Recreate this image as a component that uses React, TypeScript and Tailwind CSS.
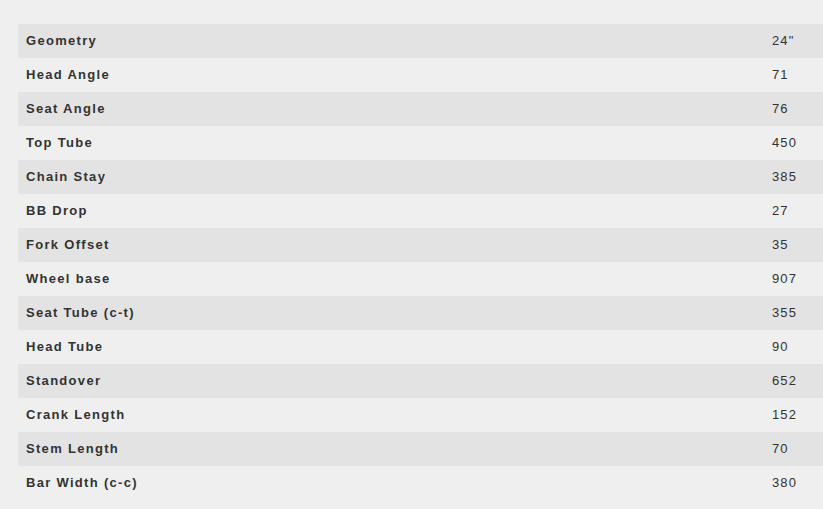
import React from "react";

const rows: [string, string][] = [
  ["Geometry", '24"'],
  ["Head Angle", "71"],
  ["Seat Angle", "76"],
  ["Top Tube", "450"],
  ["Chain Stay", "385"],
  ["BB Drop", "27"],
  ["Fork Offset", "35"],
  ["Wheel base", "907"],
  ["Seat Tube (c-t)", "355"],
  ["Head Tube", "90"],
  ["Standover", "652"],
  ["Crank Length", "152"],
  ["Stem Length", "70"],
  ["Bar Width (c-c)", "380"],
];

export default function App() {
  return (
    <div
      className="min-h-[509px] bg-[#efefef] pt-[24px] pl-[18px] text-[#333] text-[13px]"
      style={{ fontFamily: '"Liberation Sans", Arial, Helvetica, sans-serif' }}
    >
      <div className="flex flex-col">
        {rows.map(([k, v], i) => (
          <div
            key={k}
            className={`grid grid-cols-[746px_1fr] h-[34px] items-center ${i % 2 === 0 ? "bg-[#e3e3e3]" : ""}`}
          >
            <div className="pl-[8px] font-bold tracking-[1.3px]">{k}</div>
            <div className="pl-[8px] tracking-[1.1px]">{v}</div>
          </div>
        ))}
      </div>
    </div>
  );
}
